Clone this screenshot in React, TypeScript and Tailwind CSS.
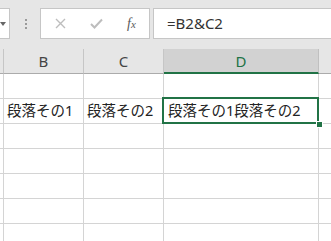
import React from "react";

const cols = [
  { w: "w-[4px]", label: "" },
  { w: "w-[80px]", label: "B" },
  { w: "w-[80px]", label: "C" },
  { w: "w-[155px]", label: "D" },
];

export default function App() {
  const rows = [1, 2, 3, 4, 5, 6, 7];
  return (
    <div
      className="w-[331px] h-[241px] overflow-hidden bg-white relative"
      style={{ fontFamily: '"Noto Sans", "Noto Sans CJK JP", sans-serif' }}
    >
      {/* formula bar */}
      <div className="h-[49px] bg-[#e6e6e6] flex items-start pt-[8px]">
        <div className="w-[10px] h-[31px] bg-white border border-l-0 border-[#c6c6c6] flex items-center justify-start">
          <svg width="6" height="4" viewBox="0 0 6 4" className="ml-[0px] mt-[1px]">
            <path d="M0 0 L6 0 L3 4 Z" fill="#666" />
          </svg>
        </div>
        <div className="w-[30px] h-[31px] flex flex-col items-center justify-center gap-[2px] pl-[1px]">
          <div className="w-[2px] h-[2px] bg-[#9a9a9a]" />
          <div className="w-[2px] h-[2px] bg-[#9a9a9a]" />
          <div className="w-[2px] h-[2px] bg-[#9a9a9a]" />
        </div>
        <div className="w-[110px] h-[31px] bg-white border border-[#c6c6c6] flex items-center">
          <div className="w-[38px] flex justify-center">
            <svg width="11" height="11" viewBox="0 0 11 11">
              <path d="M1 1 L10 10 M10 1 L1 10" stroke="#bdbdbd" strokeWidth="1.4" />
            </svg>
          </div>
          <div className="w-[35px] flex justify-center">
            <svg width="13" height="11" viewBox="0 0 13 11">
              <path d="M1 6 L4.5 9.5 L12 1.5" stroke="#bdbdbd" strokeWidth="2" fill="none" />
            </svg>
          </div>
          <div
            className="w-[35px] flex justify-center text-[#5a5a5a] text-[14px] italic"
            style={{ fontFamily: '"Liberation Serif", serif' }}
          >
            <span>
              f<span className="text-[11px]">x</span>
            </span>
          </div>
        </div>
        <div className="flex-1 ml-[3px] h-[31px] bg-white border border-r-0 border-[#c6c6c6] flex items-center pl-[13px] text-[15px] text-[#333]">
          =B2&amp;C2
        </div>
      </div>

      {/* column header */}
      <div className="flex h-[25px] bg-[#e6e6e6]">
        {cols.map((c, i) => (
          <div
            key={i}
            className={`${c.w} shrink-0 flex items-center justify-center text-[15px] text-[#444] border-r ${
              c.label === "D"
                ? "bg-[#d2d2d2] border-r-[#c0c0c0] border-b-2 border-b-[#217346] text-[#217346]"
                : "border-r-[#c6c6c6] border-b border-b-[#ababab]"
            }`}
          >
            <span className={c.label === "D" ? "text-[#217346] mt-[1px]" : ""}>{c.label}</span>
          </div>
        ))}
        <div className="flex-1 border-b border-b-[#ababab]" />
      </div>

      {/* rows */}
      {rows.map((r) => (
        <div key={r} className="flex h-[25px]">
          {cols.map((c, i) => (
            <div
              key={i}
              className={`${c.w} shrink-0 border-r border-b border-[#d4d4d4] flex items-center text-[14.5px] text-[#222] whitespace-nowrap relative ${
                i === 1 || i === 2 ? "pl-[3px]" : i === 3 ? "pl-[4px]" : ""
              }`}
            >
              {r === 2 && i === 1 && "段落その1"}
              {r === 2 && i === 2 && "段落その2"}
              {r === 2 && i === 3 && (
                <>
                  <span className="relative z-10">段落その1段落その2</span>
                  <div className="absolute left-[-2px] top-[-2px] w-[157px] h-[27px] border-2 border-[#217346]" />
                  <div className="absolute right-[-5px] bottom-[-5px] w-[7px] h-[7px] bg-[#217346] border border-white z-20" />
                </>
              )}
            </div>
          ))}
          <div className="flex-1 border-b border-[#d4d4d4]" />
        </div>
      ))}
    </div>
  );
}
